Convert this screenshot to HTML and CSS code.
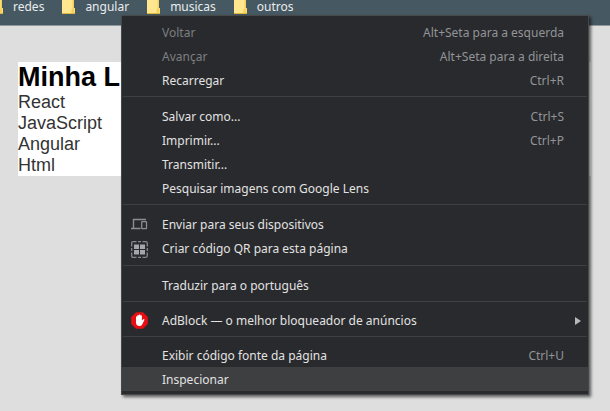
FILE: index.html
```html
<!DOCTYPE html>
<html lang="pt-BR">
<head>
<meta charset="utf-8">
<meta name="viewport" content="width=device-width, initial-scale=1">
<title>Minha Lista</title>
<link rel="stylesheet" href="styles.css">
</head>
<body>
<svg class="defs" aria-hidden="true">
  <symbol id="folder" viewBox="0 0 13 20"><path d="M0 0h11v14h2v6H0z" fill="#ffe68f"/><path d="M10.500 0v14.500l-1 1v4h3V14H12V0z" fill="#f5d257"/><path d="M0 19h13v1H0z" fill="#dfb93f"/></symbol>
</svg>
<nav class="bookmarks" aria-label="Favoritos">
  <a href="#"><svg><use href="#folder"/></svg>redes</a>
  <a href="#"><svg><use href="#folder"/></svg>angular</a>
  <a href="#"><svg><use href="#folder"/></svg>musicas</a>
  <a href="#"><svg><use href="#folder"/></svg>outros</a>
</nav>
<main class="page">
  <section class="list">
    <h1>Minha Li</h1>
    <ul>
      <li>React</li>
      <li>JavaScript</li>
      <li>Angular</li>
      <li>Html</li>
    </ul>
  </section>
</main>
<div class="menu" role="menu">
  <button class="item" role="menuitem" disabled><span>Voltar</span><kbd>Alt+Seta para a esquerda</kbd></button>
  <button class="item" role="menuitem" disabled><span>Avançar</span><kbd>Alt+Seta para a direita</kbd></button>
  <button class="item" role="menuitem"><span>Recarregar</span><kbd>Ctrl+R</kbd></button>
  <hr>
  <button class="item" role="menuitem"><span>Salvar como...</span><kbd>Ctrl+S</kbd></button>
  <button class="item" role="menuitem"><span>Imprimir...</span><kbd>Ctrl+P</kbd></button>
  <button class="item" role="menuitem"><span>Transmitir...</span></button>
  <button class="item" role="menuitem"><span>Pesquisar imagens com Google Lens</span></button>
  <hr>
  <button class="item" role="menuitem">
    <svg class="icon" viewBox="0 0 17 17" fill="none" stroke="#8b8e92"><path d="M15 3.500H2.500V12M0 12.500h9.500" stroke-width="1.400"/><rect x="10.700" y="5.700" width="4.800" height="7" rx=".5" stroke-width="1.300"/></svg>
    <span>Enviar para seus dispositivos</span>
  </button>
  <button class="item tall" role="menuitem">
    <svg class="icon" viewBox="0 0 17 17"><path d="M.7 5.500V2.200Q.7.700 2.200.700H5.500M7 .7h3M11.500.7h3.300q1.500 0 1.500 1.500V5.500M16.300 7v3M16.300 11.500v3.300q0 1.500-1.500 1.500H11.500M10 16.300H7M5.500 16.300H2.200Q.7 16.300.7 14.800V11.500M.7 10V7" fill="none" stroke="#85888c" stroke-width="1.300"/><g fill="#a3a6aa"><rect x="3" y="3.500" width="5" height="4.500"/><rect x="9" y="3.500" width="5" height="4.500"/><rect x="3" y="9" width="5" height="4.500"/><rect x="9" y="9" width="5" height="4.500"/></g></svg>
    <span>Criar código QR para esta página</span>
  </button>
  <hr>
  <button class="item" role="menuitem"><span>Traduzir para o português</span></button>
  <hr class="tight">
  <button class="item" role="menuitem">
    <svg class="icon" viewBox="0 0 17 17"><path d="M5 .3h7L16.800 5v7L12 16.700H5L.2 12V5z" fill="#e60f14"/><path d="M5 9V4.700q.6-.8 1.300 0V3.500q.7-.8 1.500 0V2.800q.8-.8 1.600 0v.8q.8-.7 1.500.1V8.500l1.300-1.300q1-.3 1.300.5l-2.300 4.700Q10.400 14 8.600 14 5.300 13.800 5 11z" fill="#fff"/></svg>
    <span>AdBlock — o melhor bloqueador de anúncios</span>
    <svg class="arrow" viewBox="0 0 6 8"><path d="M0 0l6 4-6 4z" fill="#b6b8ba"/></svg>
  </button>
  <hr class="tight">
  <button class="item" role="menuitem"><span>Exibir código fonte da página</span><kbd>Ctrl+U</kbd></button>
  <button class="item active" role="menuitem"><span>Inspecionar</span></button>
</div>
</body>
</html>
```
FILE: styles.css
```css
* { box-sizing: border-box; }

body {
  margin: 0;
  min-height: 100vh;
  overflow: hidden;
  background: #dedede;
  font-family: "Liberation Sans", Arial, sans-serif;
}

.defs { position: absolute; width: 0; height: 0; }

.bookmarks {
  display: flex;
  align-items: flex-start;
  gap: 18px;
  height: 26px;
  margin-left: -10px;
  background: #465861;
  border-bottom: 1px solid #8d989d;
}

.bookmarks a {
  display: flex;
  gap: 10px;
  color: #e9edef;
  font: 12px/14px "Noto Sans", sans-serif;
  text-decoration: none;
}

.bookmarks svg {
  width: 13px;
  height: 20px;
  margin-top: -6px;
}

.page { padding: 36px 19px 0 18px; }

.list {
  background: #fff;
  color: #333;
}

.list h1 {
  margin: 0;
  color: #000;
  font-size: 27px;
  line-height: 30px;
}

.list ul {
  margin: 0;
  padding: 0;
  list-style: none;
  font-size: 18px;
  line-height: 21px;
}

.menu {
  position: absolute;
  top: 15px;
  left: 121px;
  right: 21px;
  padding: 4px 0 3px;
  border: 1px solid #48494b;
  background: #292a2d;
  box-shadow: 2px 2px 3px rgba(0, 0, 0, 0.6);
}

.menu hr {
  height: 1px;
  margin: 4px 1px 7px;
  border: 0;
  background: #3f4043;
}

.menu hr.tight { margin-bottom: 6px; }

.item {
  display: grid;
  grid-template-columns: 31px 1fr auto;
  align-items: center;
  width: 100%;
  height: 24px;
  padding: 1px 24px 0 9px;
  border: 0;
  background: none;
  color: #e2e2e2;
  font: 12px/16px "Noto Sans", sans-serif;
  text-align: left;
}

.item.tall { height: 25px; }
.item:disabled { color: #7d7f82; }
.item.active { background: #3e3f41; }
.item span { grid-column: 2; }

.item kbd {
  color: #929497;
  font: inherit;
}

.icon {
  width: 17px;
  height: 17px;
}

.arrow {
  width: 6px;
  height: 8px;
  margin-right: -17px;
  justify-self: end;
}
```
